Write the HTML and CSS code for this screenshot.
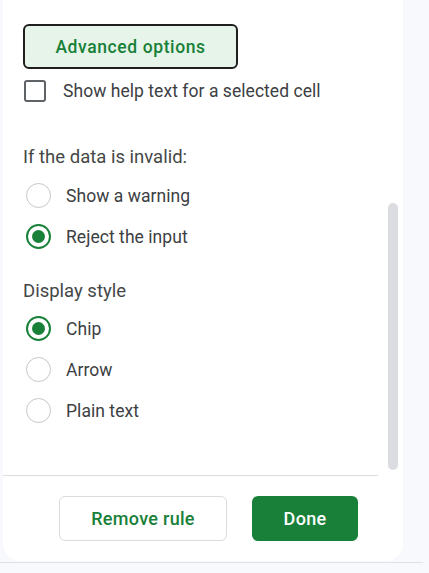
FILE: index.html
```html
<!DOCTYPE html>
<html>
<head>
<meta charset="utf-8">
<link rel="stylesheet" href="styles.css">
</head>
<body>
<div class="panel">
  <div class="main">
    <button class="adv">Advanced options</button>
    <label class="check-row"><span class="checkbox"></span><span class="text">Show help text for a selected cell</span></label>
    <div class="section-label first">If the data is invalid:</div>
    <div class="radio-row"><span class="radio"></span><span class="text">Show a warning</span></div>
    <div class="radio-row"><span class="radio on"></span><span class="text">Reject the input</span></div>
    <div class="section-label second">Display style</div>
    <div class="radio-row"><span class="radio on"></span><span class="text">Chip</span></div>
    <div class="radio-row"><span class="radio"></span><span class="text">Arrow</span></div>
    <div class="radio-row"><span class="radio"></span><span class="text">Plain text</span></div>
    <div class="scroll-thumb"></div>
  </div>
  <div class="divider"></div>
  <div class="footer">
    <button class="btn secondary">Remove rule</button>
    <button class="btn primary">Done</button>
  </div>
</div>
<div class="bottom-line"></div>
</body>
</html>
```
FILE: styles.css
```css
* { box-sizing: border-box; }
html, body { margin: 0; padding: 0; }
body {
  background: #f8f9fc;
  font-family: Roboto, "Liberation Sans", sans-serif;
  width: 429px;
  height: 573px;
  overflow: hidden;
}
.panel {
  margin-left: 3px;
  width: 400px;
  height: 561px;
  background: #ffffff;
  border-radius: 0 0 18px 18px;
  display: flex;
  flex-direction: column;
}
.main {
  position: relative;
  flex: 1;
  padding: 24px 0 0 20px;
}
.adv {
  display: block;
  width: 215px;
  height: 45px;
  background: #e6f4ea;
  border: 2px solid #1f1f1f;
  border-radius: 6px;
  color: #188038;
  font-family: inherit;
  font-size: 17.5px;
  font-weight: 500;
  letter-spacing: 0.6px;
  padding: 0;
}
.check-row {
  display: flex;
  align-items: center;
  margin-top: 11px;
  height: 22px;
}
.checkbox {
  width: 22px;
  height: 22px;
  border: 2px solid #5f6368;
  border-radius: 3px;
  margin-left: 1px;
  flex: none;
}
.text {
  font-size: 17.5px;
  color: #3c4043;
  line-height: 24px;
  letter-spacing: 0.05px;
  white-space: nowrap;
}
.check-row .text { margin-left: 17px; }
.section-label {
  font-size: 18.5px;
  line-height: 24px;
  color: #444746;
  white-space: nowrap;
}
.section-label.first { margin-top: 43px; margin-bottom: 6px; }
.section-label.second { margin-top: 22px; margin-bottom: 5px; }
.radio-row {
  display: flex;
  align-items: center;
  height: 41px;
}
.radio {
  width: 25px;
  height: 25px;
  border-radius: 50%;
  border: 1px solid #c7c7c7;
  margin-left: 3px;
  margin-right: 15px;
  position: relative;
  flex: none;
}
.radio.on {
  border: 2.5px solid #188038;
}
.radio.on::after {
  content: "";
  position: absolute;
  left: 50%;
  top: 50%;
  width: 13px;
  height: 13px;
  margin: -6.5px 0 0 -6.5px;
  border-radius: 50%;
  background: #188038;
}
.scroll-thumb {
  position: absolute;
  left: 385px;
  top: 203px;
  width: 10px;
  height: 267px;
  border-radius: 5px;
  background: #dadce0;
}
.divider {
  height: 1px;
  width: 375px;
  background: #dadce0;
}
.footer {
  display: flex;
  justify-content: flex-end;
  gap: 25px;
  padding: 20px 45px 20px 0;
}
.btn {
  height: 45px;
  border-radius: 6px;
  font-family: inherit;
  font-size: 18px;
  font-weight: 500;
  letter-spacing: 0.3px;
  padding: 0;
}
.secondary {
  width: 168px;
  background: #ffffff;
  border: 1px solid #dadce0;
  color: #188038;
}
.primary {
  width: 106px;
  background: #188038;
  border: none;
  color: #ffffff;
}
.bottom-line {
  margin-top: 1px;
  width: 423px;
  height: 1px;
  background: #dfe1e5;
}
```
